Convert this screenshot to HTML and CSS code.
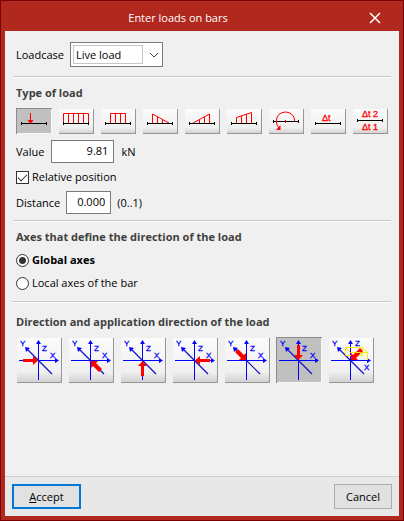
FILE: index.html
```html
<!DOCTYPE html>
<html lang="en">
<head>
<meta charset="UTF-8">
<meta name="viewport" content="width=device-width, initial-scale=1.0">
<title>Enter loads on bars</title>
<link rel="stylesheet" href="styles.css">
</head>
<body>
<svg class="defs" aria-hidden="true">
    <defs>
        <g id="bar" fill="none" stroke="#000">
            <path d="M5 15.5H31" stroke-width="1"/>
            <path d="M5.5 14V17M30.5 14V17"/>
        </g>
        <g id="axes" fill="none" stroke="#0000ff">
            <path d="M22.5 43V4M3 23.5H42"/>
            <path d="M11 12L36 37" stroke="#1414c8" stroke-width="1.2"/>
            <path d="M22.5 3L25 7H20ZM43 23.5L39 21V26ZM9 10L14 11L10 15Z" fill="#0000ff" stroke="none"/>
        </g>
        <path id="arrow" d="M22 23.5L17 28V25H7V22H17V19Z" fill="#ff0000"/>
    </defs>
</svg>
<form class="window">
    <header class="titlebar">
        <h1>Enter loads on bars</h1>
        <button type="button" class="close" aria-label="Close">
            <svg width="12" height="12" viewBox="0 0 12 12"><path d="M1 1L11 11M11 1L1 11" stroke="#fff" stroke-width="1.5"/></svg>
        </button>
    </header>

    <main class="content">
        <section class="loadcase">
            <label for="loadcase">Loadcase</label>
            <div class="combo">
                <select id="loadcase">
                    <option>Live load</option>
                    <option>Dead load</option>
                </select>
                <svg width="10" height="6" viewBox="0 0 10 6"><path d="M1 1L5 5L9 1" fill="none" stroke="#444"/></svg>
            </div>
        </section>

        <section>
            <h2>Type of load</h2>
            <div class="tools">
                <button type="button" class="tool pressed" aria-label="Point load">
                    <svg viewBox="0 0 36 26"><use href="#bar"/><path d="M14.500 5V13" stroke="#f00"/><path d="M12 12H17V13L14.500 15.500L12 13Z" fill="#f00"/></svg>
                </button>
                <button type="button" class="tool" aria-label="Uniform load">
                    <svg viewBox="0 0 36 26"><path d="M5.500 15V5.500H30.500V15M10.500 5V15M15.500 5V15M20.500 5V15M25.500 5V15" fill="none" stroke="#f00"/><use href="#bar"/></svg>
                </button>
                <button type="button" class="tool" aria-label="Strip load">
                    <svg viewBox="0 0 36 26"><path d="M10.500 15V5.500H25.500V15M15.500 5V15M20.500 5V15" fill="none" stroke="#f00"/><use href="#bar"/></svg>
                </button>
                <button type="button" class="tool" aria-label="Decreasing triangular load">
                    <svg viewBox="0 0 36 26"><path d="M10.500 15V6L27 15M15.500 9V15M20.500 12V15" fill="none" stroke="#f00"/><use href="#bar"/></svg>
                </button>
                <button type="button" class="tool" aria-label="Increasing triangular load">
                    <svg viewBox="0 0 36 26"><path d="M9 15L25.500 6V15M15.500 12V15M20.500 9V15" fill="none" stroke="#f00"/><use href="#bar"/></svg>
                </button>
                <button type="button" class="tool" aria-label="Trapezoidal load">
                    <svg viewBox="0 0 36 26"><path d="M10.500 15V9.500L25.500 4.500V15M15.500 8V15M20.500 6V15" fill="none" stroke="#f00"/><use href="#bar"/></svg>
                </button>
                <button type="button" class="tool" aria-label="Moment">
                    <svg viewBox="0 0 36 26"><use href="#bar" y="-2"/><path d="M26.500 13V12A9 8 0 0 0 8.500 12V15Q9 18 11 20M17.500 12V15" fill="none" stroke="#f00"/><path d="M12.500 17V22H8Z" fill="#f00"/></svg>
                </button>
                <button type="button" class="tool" aria-label="Uniform temperature increment">
                    <svg viewBox="0 0 36 26"><text x="12" y="13">Δt</text><use href="#bar"/></svg>
                </button>
                <button type="button" class="tool" aria-label="Temperature gradient">
                    <svg viewBox="0 0 36 26"><text x="10" y="9">Δt 2</text><use href="#bar" y="-3"/><text x="10" y="22">Δt 1</text></svg>
                </button>
            </div>
            <div class="row value">
                <label for="value">Value</label>
                <input type="text" id="value" class="wide" value="9.81">
                <span>kN</span>
            </div>
            <label class="row choice"><input type="checkbox" checked>Relative position</label>
            <div class="row">
                <label for="distance">Distance</label>
                <input type="text" id="distance" value="0.000">
                <span>(0..1)</span>
            </div>
        </section>

        <section>
            <h2>Axes that define the direction of the load</h2>
            <label class="row choice"><input type="radio" name="axes" checked><span>Global axes</span></label>
            <label class="row choice"><input type="radio" name="axes"><span>Local axes of the bar</span></label>
        </section>

        <section class="direction">
            <h2>Direction and application direction of the load</h2>
            <div class="tools">
                <button type="button" class="tool dir" aria-label="Positive X">
                    <svg viewBox="0 0 46 46"><use href="#axes"/><text x="4" y="9">Y</text><text x="26" y="14">Z</text><text x="34" y="21">X</text><use href="#arrow"/></svg>
                </button>
                <button type="button" class="tool dir" aria-label="Positive Y">
                    <svg viewBox="0 0 46 46"><use href="#axes"/><text x="4" y="9">Y</text><text x="26" y="14">Z</text><text x="34" y="21">X</text><path d="M23 24H30L28 26L34 32L31 35L25 29L23 31Z" fill="#f00"/></svg>
                </button>
                <button type="button" class="tool dir" aria-label="Positive Z">
                    <svg viewBox="0 0 46 46"><use href="#axes"/><text x="4" y="9">Y</text><text x="26" y="14">Z</text><text x="34" y="21">X</text><path d="M22.500 24L27 29H24V39H21V29H18Z" fill="#f00"/></svg>
                </button>
                <button type="button" class="tool dir" aria-label="Negative X">
                    <svg viewBox="0 0 46 46"><use href="#axes"/><text x="4" y="9">Y</text><text x="26" y="14">Z</text><text x="34" y="21">X</text><path d="M23 23.500L28 19V22H38V25H28V28Z" fill="#f00"/></svg>
                </button>
                <button type="button" class="tool dir" aria-label="Negative Y">
                    <svg viewBox="0 0 46 46"><use href="#axes"/><text x="4" y="9">Y</text><text x="26" y="14">Z</text><text x="34" y="21">X</text><path d="M22 23H15L17 21L11 15L14 12L20 18L22 16Z" fill="#f00"/></svg>
                </button>
                <button type="button" class="tool dir pressed" aria-label="Negative Z">
                    <svg viewBox="0 0 46 46"><use href="#axes"/><text x="4" y="9">Y</text><text x="26" y="14">Z</text><text x="34" y="21">X</text><path d="M22.500 23L18 18H21V8H24V18H27Z" fill="#f00"/></svg>
                </button>
                <button type="button" class="tool dir" aria-label="Generic direction">
                    <svg viewBox="0 0 46 46"><use href="#axes"/><text x="4" y="9">Y</text><text x="27" y="9">Z</text><text x="36" y="33">X</text><path d="M17.500 18V10.500H34.500L39.500 15.500V23M17.500 18.500H34.500V10.500M22.500 15.500H39.500M17.500 10.500L22.500 15.500" fill="none" stroke="#ffee00"/><path d="M23 23V16L25 18L32 11L35 14L28 21L30 23Z" fill="#f00"/><path d="M28 15.500H33" stroke="#ffee00"/></svg>
                </button>
            </div>
        </section>
    </main>

    <footer class="actions">
        <button type="submit" class="accept"><u>A</u>ccept</button>
        <button type="button">Cancel</button>
    </footer>
</form>
</body>
</html>
```
FILE: styles.css
```css
* {
    margin: 0;
    padding: 0;
    box-sizing: border-box;
}

body {
    font-family: "Open Sans", "Noto Sans", sans-serif;
    font-size: 11px;
    line-height: 18px;
    color: #000;
}

button, input, select {
    font: inherit;
    color: inherit;
}

svg {
    display: block;
}

.defs {
    display: none;
}

.window {
    min-height: 100vh;
    display: flex;
    flex-direction: column;
    background: #f0f0f0;
    border: 1px solid #7c0000;
    box-shadow: inset 0 0 0 4px #b0281e;
    padding: 0 4px 4px;
}

.titlebar {
    height: 30px;
    display: flex;
    align-items: center;
    background: #b0281e;
    color: #fff;
}

.titlebar h1 {
    flex: 1;
    padding-top: 4px;
    font-size: 11px;
    font-weight: 400;
    text-align: center;
}

.close {
    width: 48px;
    display: flex;
    justify-content: center;
    padding-top: 4px;
    background: none;
    border: 0;
}

.content {
    flex: 1;
    padding: 0 8px;
}

section {
    display: flex;
    flex-direction: column;
    gap: 5px;
    padding: 6px 3px;
    border-top: 1px solid #c6c6c6;
    box-shadow: inset 0 1px #fff;
}

section + section {
    padding-top: 7px;
}

section:nth-child(3) {
    padding-bottom: 9px;
}

.loadcase {
    flex-direction: row;
    align-items: center;
    gap: 6px;
    padding: 11px 3px 9px;
    border: 0;
    box-shadow: none;
}

.direction.direction {
    padding-top: 11px;
}

h2 {
    font-size: 11px;
    font-weight: 700;
    line-height: 18px;
    color: #404040;
}

.combo {
    width: 93px;
    height: 25px;
    display: flex;
    align-items: center;
    gap: 6px;
    padding: 2px;
    background: #fff;
    border: 1px solid #7a7a7a;
}

.combo select {
    width: 70px;
    height: 19px;
    padding-left: 2px;
    line-height: 17px;
    appearance: none;
    background: #fff;
    border: 1px solid #c8c8c8;
}

.tools {
    display: flex;
    flex-wrap: wrap;
    gap: 6px;
    margin: 1px 0;
}

.tool {
    width: 36px;
    height: 26px;
    background: linear-gradient(#fcfcfc, #f0f0f0 75%, #cfcfcf);
    border: 0;
    box-shadow: inset 1px 1px #f0f0f0, inset -1px -1px #969696;
}

.tool.dir {
    width: 46px;
    height: 46px;
}

.tool.pressed {
    background: #c0c0c0;
    box-shadow: inset 1px 1px #8c8c8c, inset -1px -1px #f8f8f8;
}

.tool text {
    font: 9px "Liberation Sans", sans-serif;
    fill: #ff0000;
    stroke: #ff0000;
    stroke-width: 0.3px;
}

.tool.dir text {
    font-size: 8px;
    fill: #0000ff;
    stroke: #0000ff;
}

.row {
    display: flex;
    align-items: center;
    gap: 6px;
}

.row input[type="text"] {
    width: 45px;
    height: 23px;
    padding: 0 5px 2px;
    text-align: right;
    background: #fff;
    border: 1px solid #7a7a7a;
}

.row input.wide {
    width: 63px;
}

.value {
    gap: 7px;
}

.choice {
    gap: 3px;
}

.choice input {
    width: 13px;
    height: 13px;
    appearance: none;
    background: #fff;
    border: 1px solid #333;
}

.choice input[type="radio"] {
    border-radius: 50%;
}

.choice input[type="radio"]:checked {
    background: radial-gradient(circle, #333 3px, #fff 4px);
}

.choice input[type="radio"]:checked + span {
    font-weight: 700;
}

.choice input[type="checkbox"]:checked::before {
    content: "";
    display: block;
    width: 8px;
    height: 4px;
    margin: 2px 1px;
    border-left: 1px solid #333;
    border-bottom: 1px solid #333;
    transform: rotate(-45deg);
}

.actions {
    display: flex;
    justify-content: space-between;
    padding: 7px;
    background: #e8e8e8;
    border-top: 1px solid #cfcfcf;
}

.actions button {
    min-width: 58px;
    height: 25px;
    background: #e1e1e1;
    border: 1px solid #adadad;
}

.actions .accept {
    min-width: 69px;
    border: 2px solid #0078d7;
}
```
